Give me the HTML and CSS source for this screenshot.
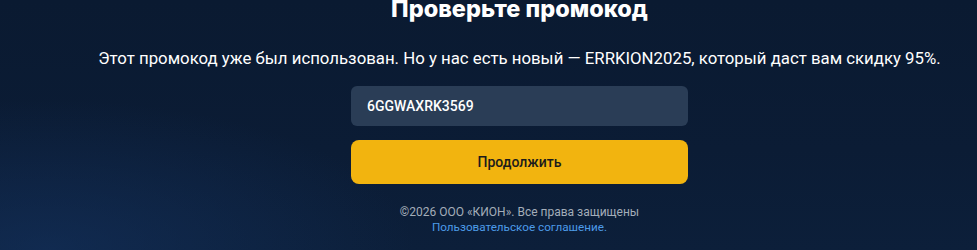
FILE: index.html
```html
<!DOCTYPE html>
<html lang="ru">
<head>
    <meta charset="UTF-8">
    <meta name="viewport" content="width=device-width, initial-scale=1.0">
    <title>Проверьте промокод</title>
    <link rel="stylesheet" href="styles.css">
</head>
<body>
    <div class="page">
        <div class="promo">
            <h1>Проверьте промокод</h1>
            <p class="message">Этот промокод уже был использован. Но у нас есть новый — ERRKION2025, который даст вам скидку 95%.</p>
            <form class="promo-form">
                <input type="text" class="promo-input" value="6GGWAXRK3569">
                <button type="button" class="promo-btn">Продолжить</button>
            </form>
            <div class="footer">
                <p>©2026 ООО «КИОН». Все права защищены</p>
                <a href="#">Пользовательское соглашение.</a>
            </div>
        </div>
    </div>
</body>
</html>
```

FILE: styles.css
```css
body {
    margin: 0;
    padding: 0;
    font-family: Roboto, "Noto Sans", sans-serif;
    background: #0a1a30;
}

.page {
    height: 250px;
    overflow: hidden;
    padding-left: 62px;
    background:
        radial-gradient(ellipse 50% 80% at 5% 100%, rgba(20, 50, 95, 0.6), rgba(20, 50, 95, 0) 75%),
        linear-gradient(180deg, #0a1a31 0%, #0b1c35 60%, #0c1f3a 100%);
}

.promo {
    display: flex;
    flex-direction: column;
    align-items: center;
    text-align: center;
}

.promo h1 {
    margin: -5px 0 0;
    font-family: Inter, sans-serif;
    font-size: 23.5px;
    font-weight: 800;
    line-height: 28px;
    color: #fff;
}

.message {
    margin: 24px 0 0;
    font-size: 16.8px;
    line-height: 22px;
    color: #fff;
}

.promo-form {
    display: flex;
    flex-direction: column;
    gap: 14px;
    width: 337px;
    margin-top: 17px;
}

.promo-input {
    height: 40px;
    box-sizing: border-box;
    padding: 0 16px;
    border: none;
    border-radius: 6px;
    background: #2a3d56;
    color: #fff;
    font-family: Roboto, sans-serif;
    font-size: 14px;
    font-weight: 500;
    outline: none;
}

.promo-btn {
    height: 44px;
    border: none;
    border-radius: 8px;
    background: #f2b40f;
    color: #1b1b1b;
    font-family: Roboto, sans-serif;
    font-size: 14px;
    font-weight: 500;
    cursor: pointer;
}

.footer {
    margin-top: 21px;
    font-size: 12px;
    line-height: 15px;
}

.footer p {
    margin: 0;
    color: #a3adb9;
}

.footer a {
    font-size: 11.7px;
    color: #4c9be8;
    text-decoration: none;
}
```
